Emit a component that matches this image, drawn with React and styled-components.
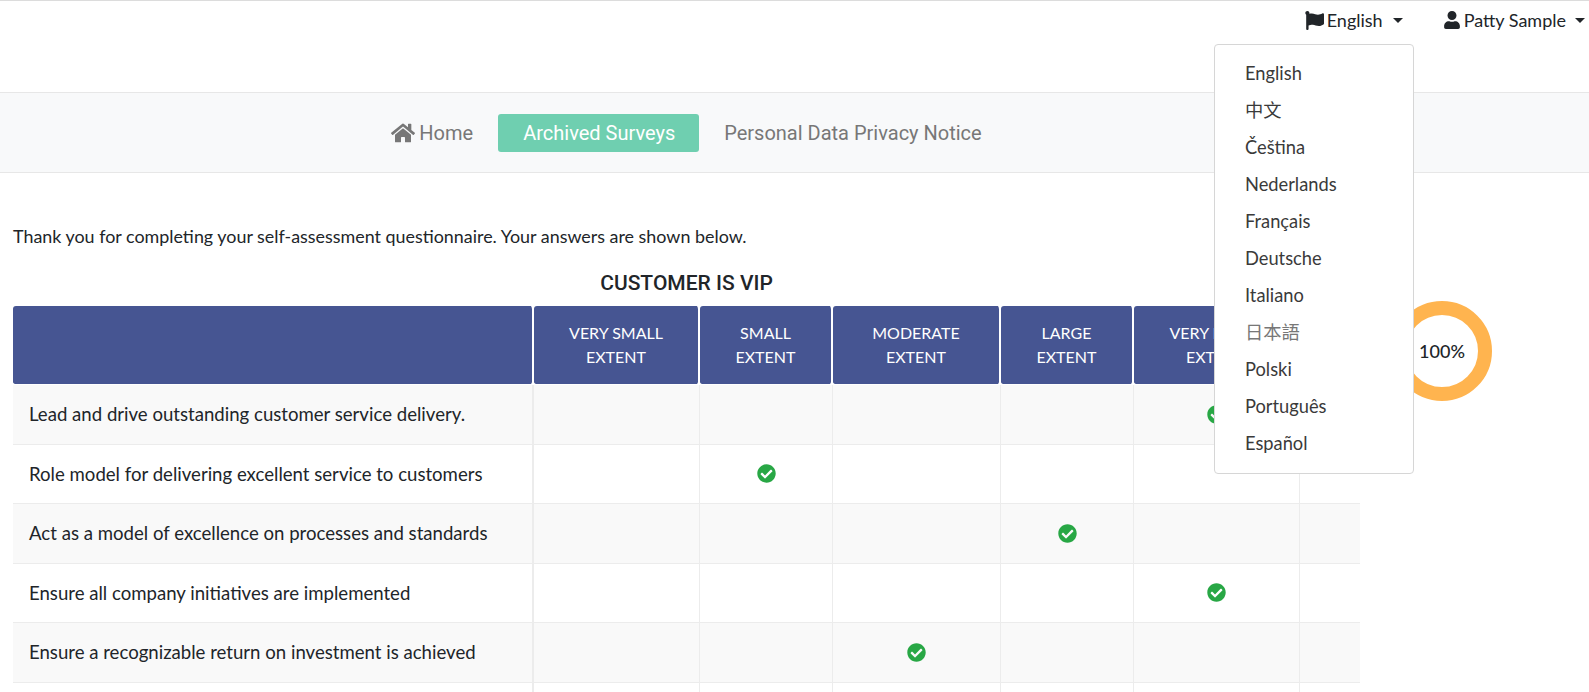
import React from 'react';
import styled, { createGlobalStyle } from 'styled-components';
import { FaFlag, FaUser, FaHome, FaCheckCircle } from 'react-icons/fa';

const GlobalStyle = createGlobalStyle`
  html, body {
    margin: 0;
    padding: 0;
    height: 692px;
    overflow: hidden;
    background: #fff;
    color: #212529;
    font-family: 'Lato', 'Noto Sans CJK SC', sans-serif;
  }
`;

const Page = styled.div`
  position: relative;
  width: 1589px;
`;

const TopBar = styled.div`
  display: flex;
  justify-content: flex-end;
  height: 92px;
  box-sizing: border-box;
  border-top: 1px solid #dcdcdc;
  padding: 6px 4px 0 0;
`;

const TopItem = styled.div`
  display: flex;
  align-items: center;
  height: 26px;
  margin-left: ${p => p.$gap || 0}px;
  font-size: 18px;
  color: #212529;
  svg {
    font-size: ${p => p.$icon}px;
  }
`;

const Caret = styled.span`
  display: inline-block;
  margin-left: ${p => p.$left}px;
  border-top: 5px solid #212529;
  border-left: 5px solid transparent;
  border-right: 5px solid transparent;
`;

const TopLabel = styled.span`
  margin-left: 3px;
`;

const LangMenu = styled.ul`
  position: absolute;
  top: 44px;
  left: 1214px;
  z-index: 5;
  box-sizing: border-box;
  width: 200px;
  height: 430px;
  margin: 0;
  padding: 10px 0;
  list-style: none;
  background: #fff;
  border: 1px solid #d6d6d6;
  border-radius: 4px;
`;

const LangItem = styled.li`
  height: 37px;
  line-height: 37px;
  padding-left: 30px;
  font-size: 18.3px;
  color: ${p => (p.$faint ? '#777' : '#3a3a3a')};
`;

const NavBar = styled.nav`
  display: flex;
  justify-content: center;
  align-items: center;
  box-sizing: border-box;
  width: 100%;
  height: 81px;
  padding-right: 216px;
  background: #f8f9fa;
  border-top: 1px solid #e7e7e7;
  border-bottom: 1px solid #e7e7e7;
`;

const NavLink = styled.a`
  display: flex;
  align-items: center;
  gap: 4px;
  height: 38px;
  padding: 0 ${p => (p.$active ? 24 : 25)}px 0 25px;
  border-radius: 3px;
  font-family: 'Roboto', sans-serif;
  font-size: 20px;
  color: ${p => (p.$active ? '#fff' : '#777')};
  background: ${p => (p.$active ? '#6fcfb0' : 'transparent')};
  svg {
    font-size: 24px;
  }
`;

const Intro = styled.p`
  margin: 51px 0 0 13px;
  font-size: 17.9px;
  line-height: 24px;
`;

const Content = styled.div`
  display: flex;
  align-items: flex-start;
  padding-left: 13px;
`;

const Survey = styled.div`
  width: 1347px;
`;

const Title = styled.h2`
  margin: 23px 0 11px;
  text-align: center;
  font-family: 'Roboto', sans-serif;
  font-size: 21px;
  font-weight: 500;
  line-height: 24px;
  color: #212529;
`;

const Table = styled.table`
  width: 1347px;
  table-layout: fixed;
  border-collapse: separate;
  border-spacing: 0;
`;

const Th = styled.th`
  height: 79px;
  box-sizing: border-box;
  padding: 0 10px;
  background: #465592;
  background-clip: padding-box;
  border-right: 2px solid #fff;
  border-bottom: 1px solid #fff;
  border-radius: 3px;
  color: #fff;
  font-size: 16px;
  font-weight: 400;
  line-height: 24px;
  text-align: center;
  &:last-child {
    border-right: 0;
  }
`;

const Row = styled.tr`
  background: ${p => (p.$odd ? '#f9f9f9' : '#fff')};
`;

const Td = styled.td`
  height: 59.5px;
  box-sizing: border-box;
  padding: 0;
  border-right: 1px solid #ececec;
  border-bottom: 1px solid #ececec;
  text-align: center;
  vertical-align: middle;
  &:last-child {
    border-right: 0;
  }
`;

const Question = styled(Td)`
  padding-left: 16px;
  border-right-width: 2px;
  text-align: left;
  font-size: 18.6px;
  color: #212529;
`;

const Check = styled(FaCheckCircle)`
  display: block;
  margin: 0 auto;
  font-size: 19px;
  color: #28a745;
`;

const Donut = styled.div`
  display: flex;
  align-items: center;
  justify-content: center;
  flex: none;
  box-sizing: border-box;
  width: 100px;
  height: 100px;
  margin: 53px 0 0 32px;
  border: 14px solid #ffb44f;
  border-radius: 50%;
  font-size: 18px;
  font-weight: 500;
  color: #212529;
`;

const languages = [
  'English', '中文', 'Čeština', 'Nederlands', 'Français', 'Deutsche',
  'Italiano', '日本語', 'Polski', 'Português', 'Español',
];

const columns = [
  { width: 521, label: '' },
  { width: 166, label: ['VERY SMALL', 'EXTENT'] },
  { width: 133, label: ['SMALL', 'EXTENT'] },
  { width: 168, label: ['MODERATE', 'EXTENT'] },
  { width: 133, label: ['LARGE', 'EXTENT'] },
  { width: 166, label: ['VERY LARGE', 'EXTENT'] },
  { width: 60, label: '' },
];

// answer = index of the column holding the tick
const questions = [
  { text: 'Lead and drive outstanding customer service delivery.', answer: 5 },
  { text: 'Role model for delivering excellent service to customers', answer: 2 },
  { text: 'Act as a model of excellence on processes and standards', answer: 4 },
  { text: 'Ensure all company initiatives are implemented', answer: 5 },
  { text: 'Ensure a recognizable return on investment is achieved', answer: 3 },
  { text: '', answer: 0 },
];

export default function App() {
  return (
    <Page>
      <GlobalStyle />
      <TopBar>
        <TopItem $icon={19}>
          <FaFlag />
          <TopLabel>English</TopLabel>
          <Caret $left={10} />
        </TopItem>
        <TopItem $gap={40} $icon={18}>
          <FaUser />
          <TopLabel>Patty Sample</TopLabel>
          <Caret $left={9} />
        </TopItem>
      </TopBar>
      <LangMenu>
        {languages.map(lang => (
          <LangItem key={lang} $faint={lang === '日本語'}>{lang}</LangItem>
        ))}
      </LangMenu>
      <NavBar>
        <NavLink><FaHome />Home</NavLink>
        <NavLink $active>Archived Surveys</NavLink>
        <NavLink>Personal Data Privacy Notice</NavLink>
      </NavBar>
      <Intro>Thank you for completing your self-assessment questionnaire. Your answers are shown below.</Intro>
      <Content>
        <Survey>
          <Title>CUSTOMER IS VIP</Title>
          <Table>
            <colgroup>
              {columns.map((col, i) => <col key={i} width={col.width} />)}
            </colgroup>
            <thead>
              <tr>
                {columns.map((col, i) => (
                  <Th key={i}>
                    {col.label && <>{col.label[0]}<br />{col.label[1]}</>}
                  </Th>
                ))}
              </tr>
            </thead>
            <tbody>
              {questions.map((q, r) => (
                <Row key={r} $odd={r % 2 === 0}>
                  <Question>{q.text}</Question>
                  {columns.slice(1).map((col, c) => (
                    <Td key={c}>{q.answer === c + 1 && <Check />}</Td>
                  ))}
                </Row>
              ))}
            </tbody>
          </Table>
        </Survey>
        <Donut>100%</Donut>
      </Content>
    </Page>
  );
}
